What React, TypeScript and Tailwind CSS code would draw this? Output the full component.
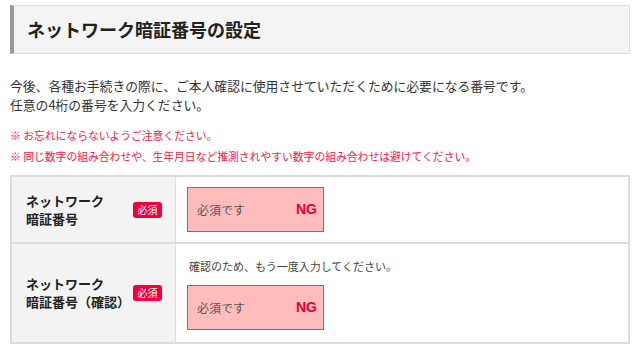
const font = { fontFamily: '"Noto Sans CJK JP", "Noto Sans", sans-serif' }

function Badge() {
  return (
    <span className="inline-flex items-center justify-center w-[29px] h-[16px] rounded-[3px] bg-[#f0003c] text-white text-[10px] leading-none shrink-0">
      必須
    </span>
  )
}

function NgInput() {
  return (
    <div className="flex items-center justify-between w-[137px] h-[45px] border border-[#ff3b3b] bg-[#ffbcbd] pl-[9px] pr-[6px]">
      <span className="text-[12px] text-[#555]">必須です</span>
      <span className="text-[14px] font-bold text-[#e6002d]" style={{ fontFamily: '"Liberation Sans", Arial, sans-serif' }}>
        NG
      </span>
    </div>
  )
}

function Label({ lines }: { lines: string[] }) {
  return (
    <div className="w-[164px] shrink-0 bg-[#f3f3f3] border-r border-[#ddd] flex items-center justify-between pl-[14px] pr-[13px]">
      <div className="text-[13px] font-bold leading-[18px] text-[#222]">
        {lines.map(l => (
          <div key={l}>{l}</div>
        ))}
      </div>
      <Badge />
    </div>
  )
}

export default function App() {
  return (
    <div className="w-[640px] h-[351px] bg-white px-[10px] pt-[5px] text-[#333]" style={font}>
      <div className="h-[49px] flex items-center bg-[#f4f4f4] border border-[#ddd] border-l-4 border-l-[#999] pl-[13px]">
        <h2 className="text-[18px] font-bold text-[#222]">ネットワーク暗証番号の設定</h2>
      </div>

      <div className="mt-[22px] text-[12.8px] leading-[19px]">
        <p>今後、各種お手続きの際に、ご本人確認に使用させていただくために必要になる番号です。</p>
        <p>任意の4桁の番号を入力ください。</p>
      </div>

      <div className="mt-[11px] text-[10.8px] leading-[21px] text-[#f0204a]">
        <p>※ お忘れにならないようご注意ください。</p>
        <p>※ 同じ数字の組み合わせや、生年月日など推測されやすい数字の組み合わせは避けてください。</p>
      </div>

      <div className="mt-[8px] border-2 border-[#ddd]">
        <div className="flex h-[67px] border-b-2 border-[#ddd]">
          <Label lines={['ネットワーク', '暗証番号']} />
          <div className="flex-1 pl-[11px] flex items-center">
            <NgInput />
          </div>
        </div>
        <div className="flex h-[98px]">
          <Label lines={['ネットワーク', '暗証番号（確認）']} />
          <div className="flex-1 pl-[13px] pt-[14px]">
            <p className="text-[11px] leading-[17px] text-[#444]">確認のため、もう一度入力してください。</p>
            <div className="mt-[10px] -ml-[2px]">
              <NgInput />
            </div>
          </div>
        </div>
      </div>
    </div>
  )
}
